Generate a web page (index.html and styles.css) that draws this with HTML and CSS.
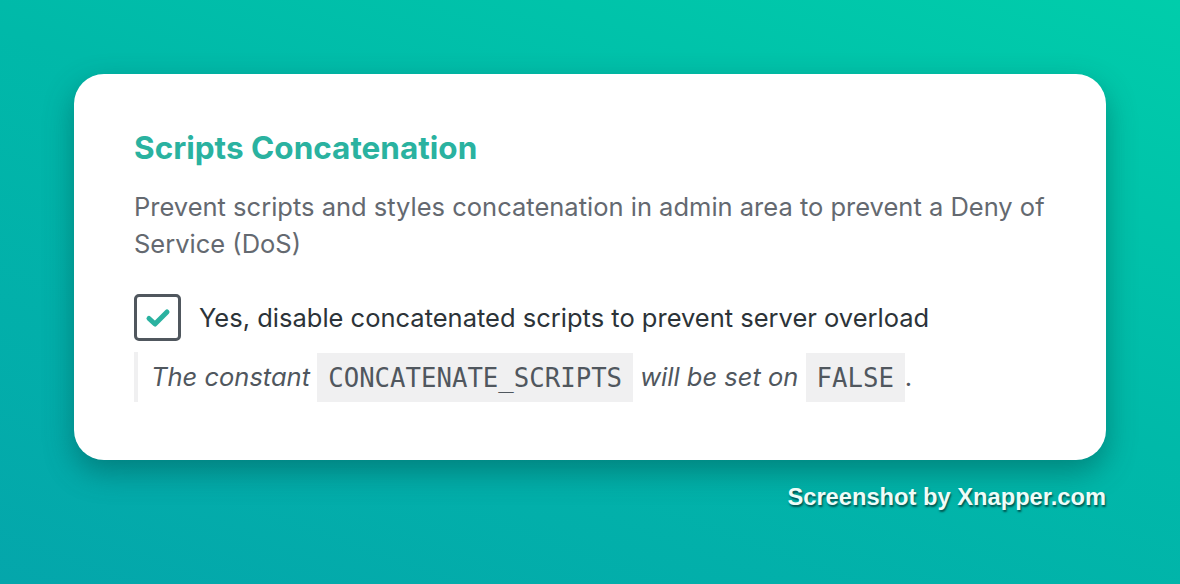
FILE: index.html
```html
<!DOCTYPE html>
<html>
<head>
    <title>Scripts Concatenation</title>
    <link rel="stylesheet" href="styles.css">
</head>
<body>
    <div class="stage">
        <div class="card">
            <h2 class="card-title">Scripts Concatenation</h2>
            <p class="card-desc">Prevent scripts and styles concatenation in admin area to prevent a Deny of Service (DoS)</p>

            <label class="option">
                <span class="checkbox">
                    <svg width="26" height="20" viewBox="0 0 26 20">
                        <path d="M4 10.5 L10 16 L22 4" fill="none" stroke="#2ab2a0" stroke-width="5" stroke-linecap="round" stroke-linejoin="round"/>
                    </svg>
                </span>
                <span class="option-text">Yes, disable concatenated scripts to prevent server overload</span>
            </label>

            <p class="note"><em>The constant</em> <code>CONCATENATE_SCRIPTS</code> <em>will be set on</em> <code>FALSE</code>.</p>
        </div>
        <div class="credit">Screenshot by Xnapper.com</div>
    </div>
</body>
</html>
```

FILE: styles.css
```css
html, body {
    height: 100%;
}

body {
    margin: 0;
    font-family: Inter, "Open Sans", sans-serif;
    background: linear-gradient(200deg, #00cdab 0%, #00b9a9 45%, #04a6ab 100%);
}

.stage {
    padding: 74px 74px 0 74px;
}

/* card */
.card {
    background-color: #fff;
    border-radius: 30px;
    padding: 54px 60px 58px 60px;
    box-shadow: 0 12px 30px rgba(0, 70, 70, 0.45);
}

.card-title {
    margin: 0;
    font-size: 31.5px;
    line-height: 40px;
    font-weight: 700;
    color: #2ab2a0;
}

.card-desc {
    margin: 20px 0 0 0;
    font-size: 25.5px;
    line-height: 37px;
    color: #646970;
}

/* checkbox row */
.option {
    display: flex;
    align-items: center;
    gap: 18px;
    margin-top: 32px;
}

.checkbox {
    box-sizing: border-box;
    width: 47px;
    height: 47px;
    border: 3px solid #50575e;
    border-radius: 5px;
    display: flex;
    align-items: center;
    justify-content: center;
}

.option-text {
    font-size: 25.5px;
    color: #2c3338;
}

/* description of the constant */
.note {
    margin: 11px 0 0 0;
    padding-left: 13px;
    border-left: 4px solid #f0f0f1;
    font-size: 25.5px;
    line-height: 49px;
    color: #50575e;
}

.note em {
    font-style: italic;
}

.note code {
    font-family: "DejaVu Sans Mono", monospace;
    font-size: 25.7px;
    background-color: #f0f0f1;
    color: #50575e;
    padding: 9.5px 11px;
}

.credit {
    text-align: right;
    margin-top: 24px;
    font-family: "Liberation Sans", Arial, sans-serif;
    font-weight: 700;
    font-size: 23.7px;
    color: #effcf8;
    text-shadow: 1px 2px 2px rgba(0, 0, 0, 0.55);
}
```
